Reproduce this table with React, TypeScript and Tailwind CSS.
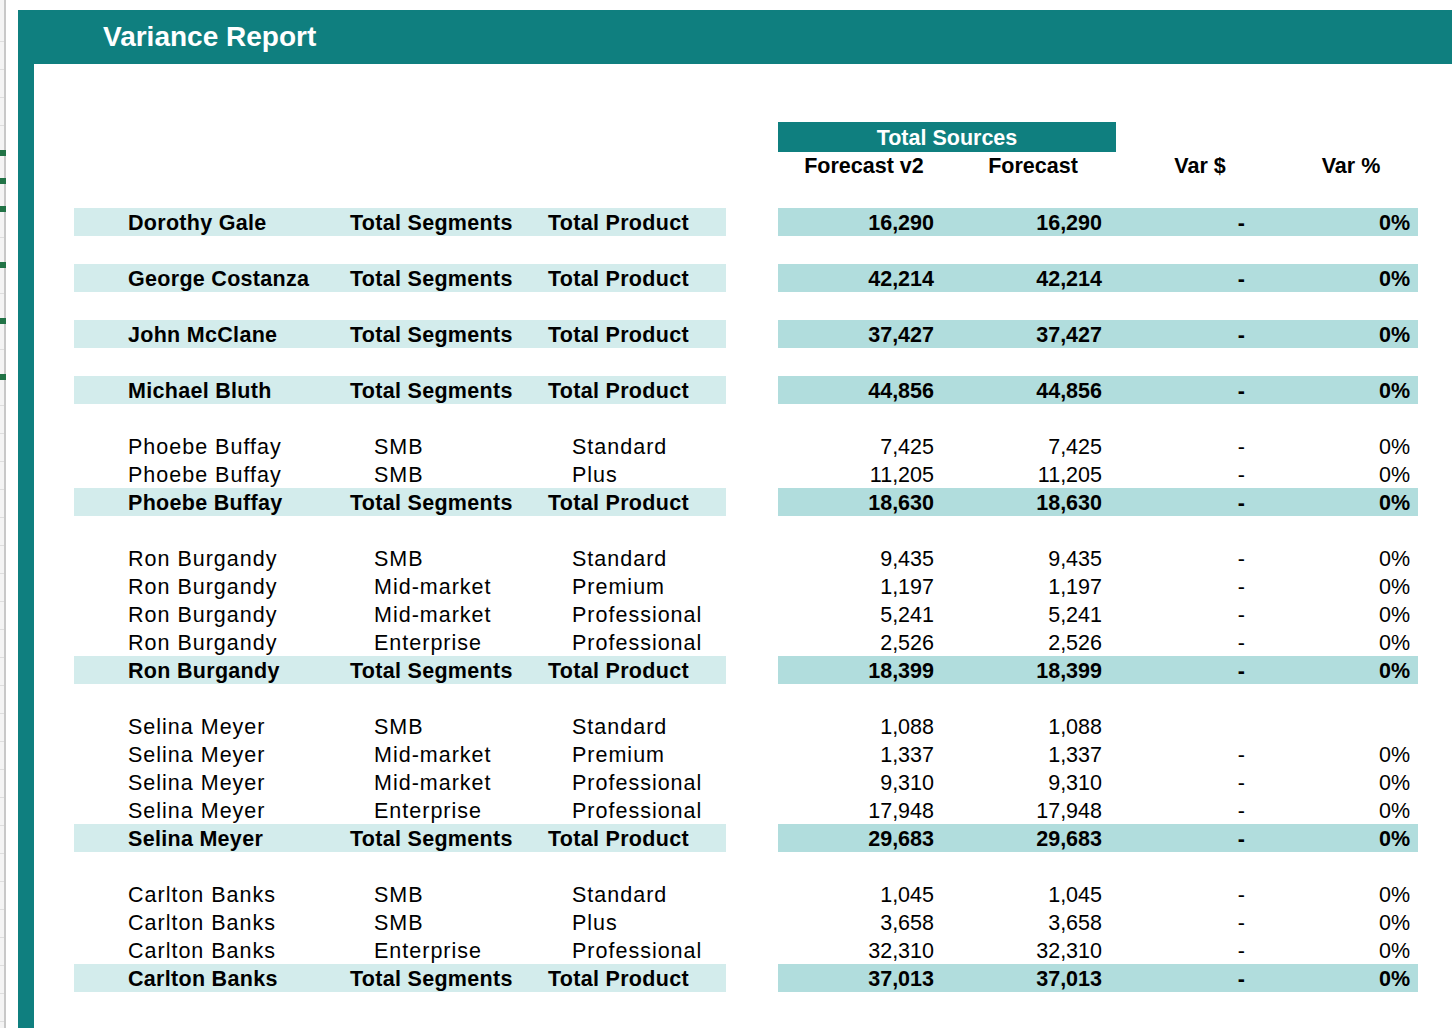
import React from "react";

type Line = {
  name: string;
  seg: string;
  prod: string;
  fv2: string;
  fc: string;
  varD: string;
  varP: string;
  total?: boolean;
};

const tot = (name: string, v: string): Line => ({
  name,
  seg: "Total Segments",
  prod: "Total Product",
  fv2: v,
  fc: v,
  varD: "-",
  varP: "0%",
  total: true,
});

const ln = (name: string, seg: string, prod: string, v: string, blankVar = false): Line => ({
  name,
  seg,
  prod,
  fv2: v,
  fc: v,
  varD: blankVar ? "" : "-",
  varP: blankVar ? "" : "0%",
});

// null = empty spacer row
const rows: (Line | null)[] = [
  tot("Dorothy Gale", "16,290"),
  null,
  tot("George Costanza", "42,214"),
  null,
  tot("John McClane", "37,427"),
  null,
  tot("Michael Bluth", "44,856"),
  null,
  ln("Phoebe Buffay", "SMB", "Standard", "7,425"),
  ln("Phoebe Buffay", "SMB", "Plus", "11,205"),
  tot("Phoebe Buffay", "18,630"),
  null,
  ln("Ron Burgandy", "SMB", "Standard", "9,435"),
  ln("Ron Burgandy", "Mid-market", "Premium", "1,197"),
  ln("Ron Burgandy", "Mid-market", "Professional", "5,241"),
  ln("Ron Burgandy", "Enterprise", "Professional", "2,526"),
  tot("Ron Burgandy", "18,399"),
  null,
  ln("Selina Meyer", "SMB", "Standard", "1,088", true),
  ln("Selina Meyer", "Mid-market", "Premium", "1,337"),
  ln("Selina Meyer", "Mid-market", "Professional", "9,310"),
  ln("Selina Meyer", "Enterprise", "Professional", "17,948"),
  tot("Selina Meyer", "29,683"),
  null,
  ln("Carlton Banks", "SMB", "Standard", "1,045"),
  ln("Carlton Banks", "SMB", "Plus", "3,658"),
  ln("Carlton Banks", "Enterprise", "Professional", "32,310"),
  tot("Carlton Banks", "37,013"),
];

const COLS = "grid grid-cols-[276px_198px_178px_52px_172px_166px_168px_134px]";

function Row({ r }: { r: Line | null }) {
  if (!r) return <div className="h-[28px]" />;
  const b = r.total;
  const left = b ? "bg-[#d3ecec] font-bold tracking-[0.3px]" : "tracking-[1px]";
  const right = b ? "bg-[#b1dddd] font-bold" : "";
  const cell = "h-[28px] pt-[2px] leading-[26px] whitespace-nowrap";
  return (
    <div className={COLS}>
      <div className={`${cell} ${left} pl-[54px]`}>{r.name}</div>
      <div className={`${cell} ${left} ${b ? "" : "pl-[24px]"}`}>{r.seg}</div>
      <div className={`${cell} ${left} ${b ? "" : "pl-[24px]"}`}>{r.prod}</div>
      <div />
      <div className={`${cell} ${right} text-right pr-[16px]`}>{r.fv2}</div>
      <div className={`${cell} ${right} text-right pr-[14px]`}>{r.fc}</div>
      <div className={`${cell} ${right} text-right pr-[39px]`}>{r.varD}</div>
      <div className={`${cell} ${right} text-right pr-[8px]`}>{r.varP}</div>
    </div>
  );
}

function Gutter() {
  const marks = ["mt-[150px]", "mt-[22px]", "mt-[22px]", "mt-[50px]", "mt-[50px]", "mt-[50px]"];
  return (
    <div className="w-[6px] h-full shrink-0 border-r-2 border-[#c8c8c8] bg-[repeating-linear-gradient(to_bottom,#f4f4f4_0px,#f4f4f4_27px,#dedede_27px,#dedede_28px)] [background-position:0px_14px] flex flex-col">
      {marks.map((m, i) => (
        <div key={i} className={`${m} h-[6px] w-[6px] bg-[#217346]`} />
      ))}
    </div>
  );
}

export default function App() {
  return (
    <div className="w-[1452px] h-[1028px] overflow-hidden bg-white flex font-['Liberation_Sans',Arial,sans-serif] text-black">
      <Gutter />
      <div className="w-[12px] shrink-0" />
      <div className="flex-1 flex flex-col pt-[10px]">
        <div className="h-[54px] bg-[#0f7f7f] flex items-center pl-[85px]">
          <h1 className="text-[28px] font-bold text-white leading-[32px]">Variance Report</h1>
        </div>
        <div className="flex flex-1">
          <div className="w-[16px] shrink-0 bg-[#0f7f7f]" />
          <div className="flex-1 pl-[40px] pt-[58px] text-[21.5px]">
            <div className={COLS}>
              <div className="col-span-4" />
              <div className="col-span-2 h-[30px] bg-[#0f7f7f] text-white font-bold text-center leading-[30px] pt-[1px]">
                Total Sources
              </div>
            </div>
            <div className={`${COLS} font-bold`}>
              <div className="col-span-4" />
              <div className="h-[28px] pt-[1px] leading-[26px] text-center">Forecast v2</div>
              <div className="h-[28px] pt-[1px] leading-[26px] text-center">Forecast</div>
              <div className="h-[28px] pt-[1px] leading-[26px] text-center">Var $</div>
              <div className="h-[28px] pt-[1px] leading-[26px] text-center">Var %</div>
            </div>
            <div className="h-[28px]" />
            {rows.map((r, i) => (
              <Row key={i} r={r} />
            ))}
          </div>
        </div>
      </div>
    </div>
  );
}
